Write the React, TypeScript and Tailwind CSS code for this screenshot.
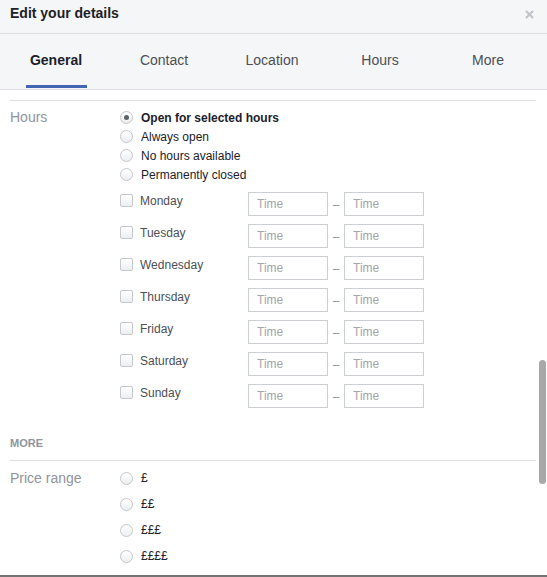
import React from "react";

const font = { fontFamily: '"Liberation Sans", Arial, Helvetica, sans-serif' };

function Radio({ checked = false }: { checked?: boolean }) {
  return (
    <span className="flex h-[13px] w-[13px] shrink-0 items-center justify-center rounded-full border border-[#c4c7cc] bg-gradient-to-b from-white to-[#eceef0]">
      {checked && <span className="h-[5px] w-[5px] rounded-full bg-[#5f6368]" />}
    </span>
  );
}

function Checkbox() {
  return (
    <span className="block h-[13px] w-[13px] shrink-0 rounded-[2px] border border-[#c4c7cc] bg-gradient-to-b from-white to-[#eceef0]" />
  );
}

function TimeInput() {
  return (
    <div className="flex h-[24px] w-[80px] items-center border border-[#ccd0d5] bg-white pl-[8px] text-[12px] text-[#a2a5aa]">
      Time
    </div>
  );
}

const tabs = ["General", "Contact", "Location", "Hours", "More"];
const days = ["Monday", "Tuesday", "Wednesday", "Thursday", "Friday", "Saturday", "Sunday"];
const hoursOpts = ["Open for selected hours", "Always open", "No hours available", "Permanently closed"];
const prices = ["£", "££", "£££", "££££"];

export default function App() {
  return (
    <div style={font} className="relative h-[577px] w-[547px] overflow-hidden border-b-2 border-[#747474] bg-white">
      {/* Header */}
      <div className="flex h-[34px] items-start justify-between border-b border-[#dddfe2] bg-[#f5f6f7] pl-[10px] pr-[13px] pt-[4px]">
        <span className="text-[14px] font-bold leading-[18px] text-[#1d2129]">Edit your details</span>
        <svg width="9" height="9" viewBox="0 0 9 9" className="mt-[6px]">
          <path d="M1 1 L8 8 M8 1 L1 8" stroke="#bec3c9" strokeWidth="2" />
        </svg>
      </div>

      {/* Tabs */}
      <div className="flex h-[56px] border-b border-[#dddfe2] bg-[#f5f6f7] pl-[2px]">
        {tabs.map((t, i) => (
          <div key={t} className="flex w-[108px] flex-col items-center">
            <div
              className={
                "flex h-[51px] items-center pt-[1px] text-[14px] " +
                (i === 0 ? "font-bold text-[#1d2129]" : "text-[#4b4f56]")
              }
            >
              {t}
            </div>
            {i === 0 && <div className="h-[3px] w-[61px] bg-[#4267b2]" />}
          </div>
        ))}
      </div>

      {/* Content */}
      <div className="ml-[10px] w-[526px]">
        <div className="mt-[10px] h-px bg-[#dddfe2]" />

        {/* Hours */}
        <div className="mt-[7px] flex">
          <div className="w-[110px] pt-[1px] text-[14px] leading-[16px] text-[#90949c]">Hours</div>
          <div className="flex flex-col">
            {hoursOpts.map((o, i) => (
              <div key={o} className="flex h-[19px] items-center gap-[8px]">
                <Radio checked={i === 0} />
                <span className={"text-[12px] " + (i === 0 ? "font-bold text-[#1d2129]" : "text-[#1d2129]")}>{o}</span>
              </div>
            ))}
            <div className="mt-[8px] flex flex-col">
              {days.map((d) => (
                <div key={d} className="flex h-[32px] items-start">
                  <div className="flex w-[128px] items-start gap-[7px]">
                    <span className="mt-[2px]">
                      <Checkbox />
                    </span>
                    <span className="mt-[1px] text-[12px] leading-[16px] text-[#4b4f56]">{d}</span>
                  </div>
                  <TimeInput />
                  <div className="flex h-[24px] w-[16px] items-end justify-center pb-[5px] text-[12px] leading-[12px] text-[#90949c]">
                    –
                  </div>
                  <TimeInput />
                </div>
              ))}
            </div>
          </div>
        </div>

        {/* MORE */}
        <div className="mt-[20px] border-b border-[#dddfe2] pb-[10px] text-[11px] font-bold leading-[14px] text-[#90949c]">
          MORE
        </div>

        <div className="mt-[4px] flex">
          <div className="flex h-[26px] w-[110px] items-center text-[14px] text-[#90949c]">Price range</div>
          <div className="flex flex-col">
            {prices.map((p) => (
              <div key={p} className="flex h-[26px] items-center gap-[8px]">
                <Radio />
                <span className="text-[12px] text-[#1d2129]">{p}</span>
              </div>
            ))}
          </div>
        </div>
      </div>

      {/* Scrollbar thumb */}
      <div className="absolute left-[539px] top-[360px] h-[124px] w-[7px] rounded-[4px] bg-[#a8a8a8]" />
    </div>
  );
}
